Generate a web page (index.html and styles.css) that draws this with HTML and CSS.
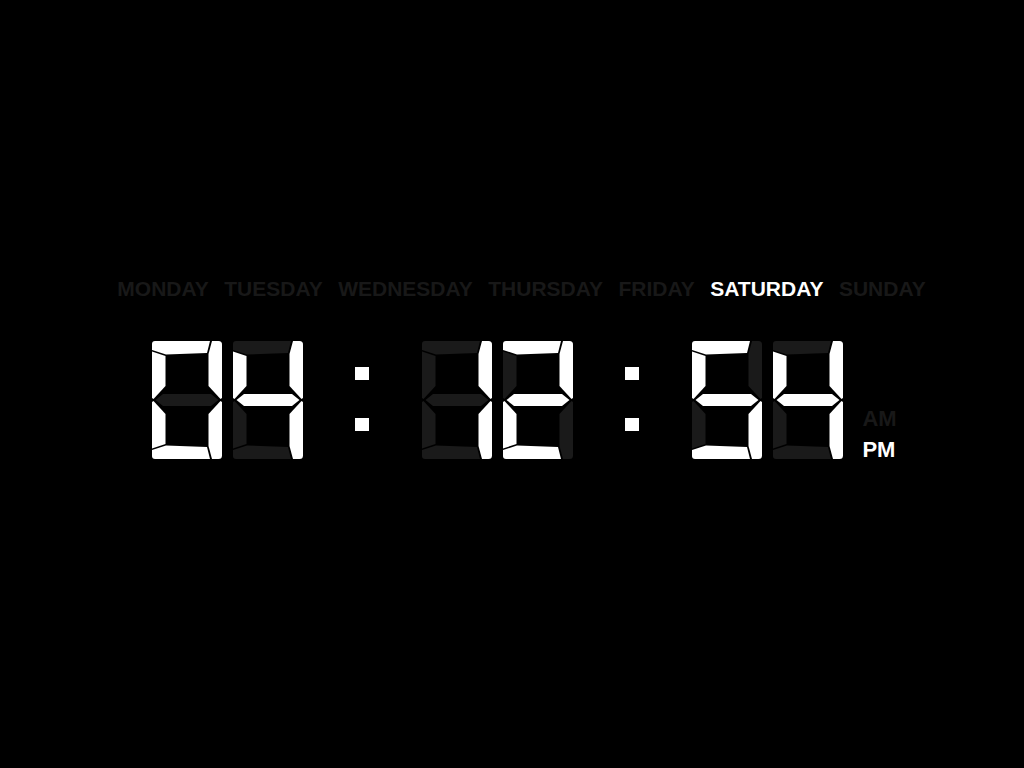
FILE: index.html
```html
<!DOCTYPE html>
<html lang="en">
<head>
<meta charset="utf-8">
<title>Digital Clock</title>
<link rel="stylesheet" href="styles.css">
</head>
<body>
<div class="clock">
  <div class="weekdays">
    <span>MONDAY</span>
    <span>TUESDAY</span>
    <span>WEDNESDAY</span>
    <span>THURSDAY</span>
    <span>FRIDAY</span>
    <span class="active">SATURDAY</span>
    <span>SUNDAY</span>
  </div>
  <div class="display">
    <div class="pair">
      <!-- 0 -->
      <svg class="digit" viewBox="0 0 70 118" width="70" height="118">
        <path class="on"  d="M0 9 V3 Q0 0 3 0 H58 L55 12 L14 13.5 Z"/>
        <path class="on"  d="M60 0 H66.5 Q70 0 70 3.5 V57 L68.5 58 L56.5 45 V13 Z"/>
        <path class="on"  d="M60 118 H66.5 Q70 118 70 114.5 V61 L68.5 60 L56.5 73 V105 Z"/>
        <path class="on"  d="M0 109 V115 Q0 118 3 118 H58 L55 106 L14 104.5 Z"/>
        <path class="on"  d="M0 107.5 L13.5 103 V73 L1.5 60 L0 61 Z"/>
        <path class="on"  d="M0 10.5 L13.5 15 V45 L1.5 58 L0 57 Z"/>
        <path class="off" d="M3.5 59 L11 53 H59 L66.5 59 L59 65 H11 Z"/>
      </svg>
      <!-- 4 -->
      <svg class="digit" viewBox="0 0 70 118" width="70" height="118">
        <path class="off" d="M0 9 V3 Q0 0 3 0 H58 L55 12 L14 13.5 Z"/>
        <path class="on"  d="M60 0 H66.5 Q70 0 70 3.5 V57 L68.5 58 L56.5 45 V13 Z"/>
        <path class="on"  d="M60 118 H66.5 Q70 118 70 114.5 V61 L68.5 60 L56.5 73 V105 Z"/>
        <path class="off" d="M0 109 V115 Q0 118 3 118 H58 L55 106 L14 104.5 Z"/>
        <path class="off" d="M0 107.5 L13.5 103 V73 L1.5 60 L0 61 Z"/>
        <path class="on"  d="M0 10.5 L13.5 15 V45 L1.5 58 L0 57 Z"/>
        <path class="on"  d="M3.5 59 L11 53 H59 L66.5 59 L59 65 H11 Z"/>
      </svg>
    </div>
    <div class="colon"><span></span><span></span></div>
    <div class="pair">
      <!-- 1 -->
      <svg class="digit" viewBox="0 0 70 118" width="70" height="118">
        <path class="off" d="M0 9 V3 Q0 0 3 0 H58 L55 12 L14 13.5 Z"/>
        <path class="on"  d="M60 0 H66.5 Q70 0 70 3.5 V57 L68.5 58 L56.5 45 V13 Z"/>
        <path class="on"  d="M60 118 H66.5 Q70 118 70 114.5 V61 L68.5 60 L56.5 73 V105 Z"/>
        <path class="off" d="M0 109 V115 Q0 118 3 118 H58 L55 106 L14 104.5 Z"/>
        <path class="off" d="M0 107.5 L13.5 103 V73 L1.5 60 L0 61 Z"/>
        <path class="off" d="M0 10.5 L13.5 15 V45 L1.5 58 L0 57 Z"/>
        <path class="off" d="M3.5 59 L11 53 H59 L66.5 59 L59 65 H11 Z"/>
      </svg>
      <!-- 2 -->
      <svg class="digit" viewBox="0 0 70 118" width="70" height="118">
        <path class="on"  d="M0 9 V3 Q0 0 3 0 H58 L55 12 L14 13.5 Z"/>
        <path class="on"  d="M60 0 H66.5 Q70 0 70 3.5 V57 L68.5 58 L56.5 45 V13 Z"/>
        <path class="off" d="M60 118 H66.5 Q70 118 70 114.5 V61 L68.5 60 L56.5 73 V105 Z"/>
        <path class="on"  d="M0 109 V115 Q0 118 3 118 H58 L55 106 L14 104.5 Z"/>
        <path class="on"  d="M0 107.5 L13.5 103 V73 L1.5 60 L0 61 Z"/>
        <path class="off" d="M0 10.5 L13.5 15 V45 L1.5 58 L0 57 Z"/>
        <path class="on"  d="M3.5 59 L11 53 H59 L66.5 59 L59 65 H11 Z"/>
      </svg>
    </div>
    <div class="colon"><span></span><span></span></div>
    <div class="pair">
      <!-- 5 -->
      <svg class="digit" viewBox="0 0 70 118" width="70" height="118">
        <path class="on"  d="M0 9 V3 Q0 0 3 0 H58 L55 12 L14 13.5 Z"/>
        <path class="off" d="M60 0 H66.5 Q70 0 70 3.5 V57 L68.5 58 L56.5 45 V13 Z"/>
        <path class="on"  d="M60 118 H66.5 Q70 118 70 114.5 V61 L68.5 60 L56.5 73 V105 Z"/>
        <path class="on"  d="M0 109 V115 Q0 118 3 118 H58 L55 106 L14 104.5 Z"/>
        <path class="off" d="M0 107.5 L13.5 103 V73 L1.5 60 L0 61 Z"/>
        <path class="on"  d="M0 10.5 L13.5 15 V45 L1.5 58 L0 57 Z"/>
        <path class="on"  d="M3.5 59 L11 53 H59 L66.5 59 L59 65 H11 Z"/>
      </svg>
      <!-- 4 -->
      <svg class="digit" viewBox="0 0 70 118" width="70" height="118">
        <path class="off" d="M0 9 V3 Q0 0 3 0 H58 L55 12 L14 13.5 Z"/>
        <path class="on"  d="M60 0 H66.5 Q70 0 70 3.5 V57 L68.5 58 L56.5 45 V13 Z"/>
        <path class="on"  d="M60 118 H66.5 Q70 118 70 114.5 V61 L68.5 60 L56.5 73 V105 Z"/>
        <path class="off" d="M0 109 V115 Q0 118 3 118 H58 L55 106 L14 104.5 Z"/>
        <path class="off" d="M0 107.5 L13.5 103 V73 L1.5 60 L0 61 Z"/>
        <path class="on"  d="M0 10.5 L13.5 15 V45 L1.5 58 L0 57 Z"/>
        <path class="on"  d="M3.5 59 L11 53 H59 L66.5 59 L59 65 H11 Z"/>
      </svg>
    </div>
    <div class="ampm">
      <span>AM</span>
      <span class="active">PM</span>
    </div>
  </div>
</div>
</body>
</html>
```

FILE: styles.css
```css
html, body {
  margin: 0;
  padding: 0;
  background: #000;
  height: 100%;
}

body {
  font-family: "Liberation Sans", Arial, sans-serif;
  color: #181818;
}

.clock {
  display: flex;
  flex-direction: column;
  align-items: center;
  padding-top: 277px;
  padding-left: 19px;
}

.weekdays {
  display: flex;
  gap: 15.5px;
  font-size: 21px;
  font-weight: bold;
  line-height: 24px;
  color: #181818;
}

.weekdays .active {
  color: #fff;
}

.display {
  display: flex;
  align-items: flex-start;
  margin-top: 40px;
  margin-left: 6px;
}

.pair {
  display: flex;
  gap: 11px;
}

.digit {
  display: block;
}

.digit .on {
  fill: #fff;
}

.digit .off {
  fill: #1a1a1a;
}

.colon {
  display: flex;
  flex-direction: column;
  gap: 38px;
  width: 14px;
  padding-top: 26px;
  margin: 0 53px 0 52px;
}

.colon span {
  display: block;
  width: 14px;
  height: 13px;
  background: #fff;
}

.ampm {
  display: flex;
  flex-direction: column;
  margin-left: 19px;
  padding-top: 62px;
  font-size: 22px;
  font-weight: bold;
  line-height: 31px;
  color: #181818;
}

.ampm .active {
  color: #fff;
}
```
